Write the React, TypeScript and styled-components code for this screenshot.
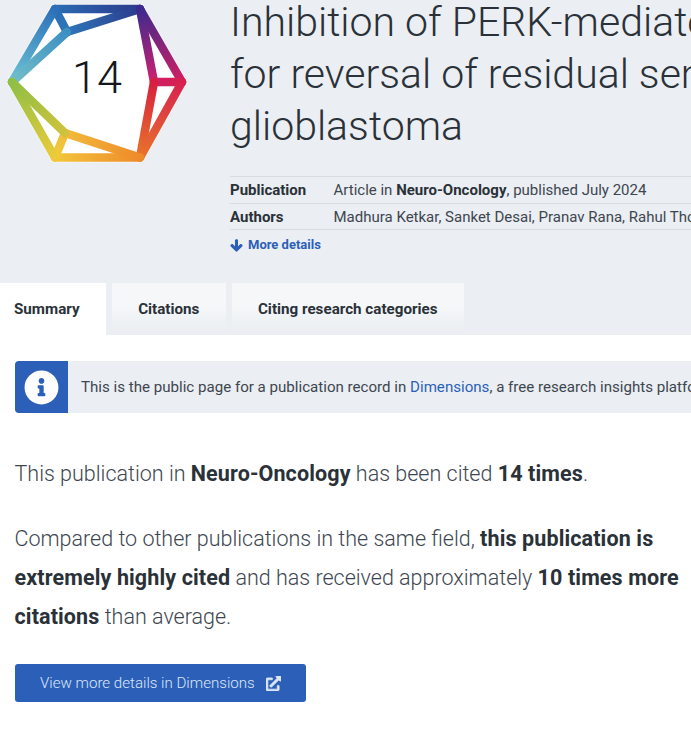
import React from "react";
import styled, { createGlobalStyle } from "styled-components";
import { FaInfoCircle, FaArrowDown, FaExternalLinkAlt } from "react-icons/fa";

const Global = createGlobalStyle`
  html, body { margin: 0; padding: 0; background: #fff; overflow: hidden; }
  body { font-family: Roboto, "Liberation Sans", sans-serif; color: #212b36; }
`;

const Page = styled.div`
  width: 691px;
  height: 743px;
  overflow: hidden;
  background: #fff;
`;
const Header = styled.header`
  background: #ebeef2;
  height: 335px;
  display: flex;
  flex-direction: column;
  justify-content: space-between;
`;
const Top = styled.div`
  display: flex;
  align-items: flex-start;
`;
const LogoBox = styled.div`
  position: relative;
  flex: none;
  width: 230px;
  height: 170px;
  svg { filter: drop-shadow(0 0 1px #fff); }
`;
const LogoNumber = styled.span`
  position: absolute;
  left: 72px;
  top: 52px;
  font-size: 45px;
  line-height: 52px;
  font-weight: 300;
  color: #14181c;
`;
const Main = styled.div`
  flex: 1;
  min-width: 0;
  margin-top: -4px;
`;
const Title = styled.h1`
  margin: 0 0 24px;
  font-size: 41px;
  line-height: 52px;
  font-weight: 300;
  color: #2a3138;
  white-space: nowrap;
`;
const Table = styled.div`
  border-top: 1px solid #d7dce1;
  width: 461px;
`;
const Row = styled.div`
  display: flex;
  height: 26.5px;
  padding-top: 1px;
  box-sizing: border-box;
  align-items: center;
  border-bottom: 1px solid #d7dce1;
  font-size: 15px;
  white-space: nowrap;
`;
const RowLabel = styled.div`
  flex: none;
  width: 104px;
  font-weight: 700;
  color: #2a3138;
`;
const RowValue = styled.div`
  color: #3d4650;
  margin-left: -0.5px;
  b { font-weight: 700; color: #2a3138; }
`;
const More = styled.a`
  display: flex;
  align-items: center;
  gap: 5px;
  margin-top: 8px;
  font-size: 13px;
  line-height: 14px;
  font-weight: 700;
  color: #2c5fb8;
  svg { width: 13px; height: 13px; stroke: currentColor; stroke-width: 40; }
`;
const Tabs = styled.nav`
  display: flex;
  gap: 6px;
  height: 52px;
`;
const Tab = styled.div<{ $active?: boolean; $first?: boolean }>`
  display: flex;
  align-items: center;
  padding: 0 26.5px 0 ${(p) => (p.$first ? "14px" : "26px")};
  font-size: 15.2px;
  font-weight: 700;
  color: #2a3138;
  background: ${(p) =>
    p.$active ? "#fff" : "linear-gradient(#f5f7f9 45%, #e9edf1)"};
`;
const Content = styled.main`
  padding: 26px 0 0 15px;
  white-space: nowrap;
`;
const Banner = styled.div`
  display: flex;
  align-items: center;
  height: 52px;
  width: 700px;
  background: #ebeef2;
  border-radius: 4px;
  overflow: hidden;
  font-size: 15.1px;
  color: #3d4650;
`;
const BannerIcon = styled.div`
  flex: none;
  width: 53px;
  height: 100%;
  margin-right: 13px;
  background: #2c5fb8;
  color: #fff;
  display: flex;
  align-items: center;
  justify-content: center;
  svg { width: 35px; height: 35px; }
`;
const BannerLink = styled.a`
  color: #2c5fb8;
`;
const Para = styled.p`
  margin: 41px 0 26px -0.5px;
  font-size: 21.5px;
  line-height: 39px;
  font-weight: 300;
  color: #3d4650;
  b { font-weight: 700; color: #2a3138; letter-spacing: 0.12px; }
  & + & { margin-top: 26px; }
`;
const Button = styled.a`
  display: flex;
  align-items: center;
  gap: 11px;
  box-sizing: border-box;
  width: 291px;
  height: 38px;
  margin-top: 28px;
  padding-left: 25px;
  background: #2c5fb8;
  border-radius: 3px;
  color: #dbe7f7;
  font-size: 15.1px;
  font-weight: 300;
  svg { width: 15px; height: 15px; stroke: currentColor; stroke-width: 25; }
`;

const P = {
  A: [55, 9], B: [140, 9], C: [182, 82], D: [140, 157.5], E: [55, 157.5], F: [12, 82],
  G: [67, 32], H: [154, 82], I: [65, 133],
};
type K = keyof typeof P;
const segs: [K, K, string, string][] = [
  ["A", "B", "#2b6cb3", "#2b3a8c"],
  ["A", "G", "#2b6cb3", "#2f76b8"],
  ["G", "B", "#2f76b8", "#2b3a8c"],
  ["A", "F", "#2b70b8", "#6cc3d5"],
  ["G", "F", "#3d8fc4", "#72bfc8"],
  ["B", "C", "#3d2a8e", "#d01f63"],
  ["B", "H", "#3d2a8e", "#cf2070"],
  ["H", "C", "#cf2068", "#d6204f"],
  ["C", "D", "#d6204f", "#e9752a"],
  ["H", "D", "#d6203f", "#e9752a"],
  ["D", "E", "#ee8a2a", "#f3c63b"],
  ["D", "I", "#ee8a2a", "#f2bb3a"],
  ["I", "E", "#f2bb3a", "#f0cc3a"],
  ["E", "F", "#eccb3a", "#8fbf45"],
  ["I", "F", "#cfc23c", "#8fbf45"],
];

const Logo = () => (
  <svg width="195" height="168" viewBox="0 0 195 168" aria-hidden="true">
    <defs>
      {segs.map(([a, b, c1, c2], i) => (
        <linearGradient
          key={i}
          id={`s${i}`}
          gradientUnits="userSpaceOnUse"
          x1={P[a][0]}
          y1={P[a][1]}
          x2={P[b][0]}
          y2={P[b][1]}
        >
          <stop offset="0" stopColor={c1} />
          <stop offset="1" stopColor={c2} />
        </linearGradient>
      ))}
    </defs>
    <polygon points="55,9 140,9 182,82 140,157 55,157 12,82" fill="#fff" />
    {segs.map(([a, b], i) => (
      <line
        key={i}
        x1={P[a][0]}
        y1={P[a][1]}
        x2={P[b][0]}
        y2={P[b][1]}
        stroke={`url(#s${i})`}
        strokeWidth="8.5"
        strokeLinecap="round"
      />
    ))}
  </svg>
);

export default function App() {
  return (
    <Page>
      <Global />
      <Header>
        <Top>
          <LogoBox>
            <Logo />
            <LogoNumber>14</LogoNumber>
          </LogoBox>
          <Main>
            <Title>
              Inhibition of PERK-mediated unfolded protein
              <br />
              for reversal of residual senescence
              <br />
              glioblastoma
            </Title>
            <Table>
              <Row>
                <RowLabel>Publication</RowLabel>
                <RowValue>
                  Article in <b>Neuro-Oncology</b>, published July 2024
                </RowValue>
              </Row>
              <Row>
                <RowLabel>Authors</RowLabel>
                <RowValue>Madhura Ketkar, Sanket Desai, Pranav Rana, Rahul Thorat</RowValue>
              </Row>
            </Table>
            <More>
              <FaArrowDown />
              More details
            </More>
          </Main>
        </Top>
        <Tabs>
          <Tab $active $first>Summary</Tab>
          <Tab>Citations</Tab>
          <Tab>Citing research categories</Tab>
        </Tabs>
      </Header>
      <Content>
        <Banner>
          <BannerIcon>
            <FaInfoCircle />
          </BannerIcon>
          <span>
            This is the public page for a publication record in <BannerLink>Dimensions</BannerLink>, a free research insights platform
          </span>
        </Banner>
        <Para>
          This publication in <b>Neuro-Oncology</b> has been cited <b>14 times</b>.
        </Para>
        <Para>
          Compared to other publications in the same field, <b>this publication is</b>
          <br />
          <b>extremely highly cited</b> and has received approximately <b>10 times more</b>
          <br />
          <b>citations</b> than average.
        </Para>
        <Button>
          View more details in Dimensions
          <FaExternalLinkAlt />
        </Button>
      </Content>
    </Page>
  );
}
